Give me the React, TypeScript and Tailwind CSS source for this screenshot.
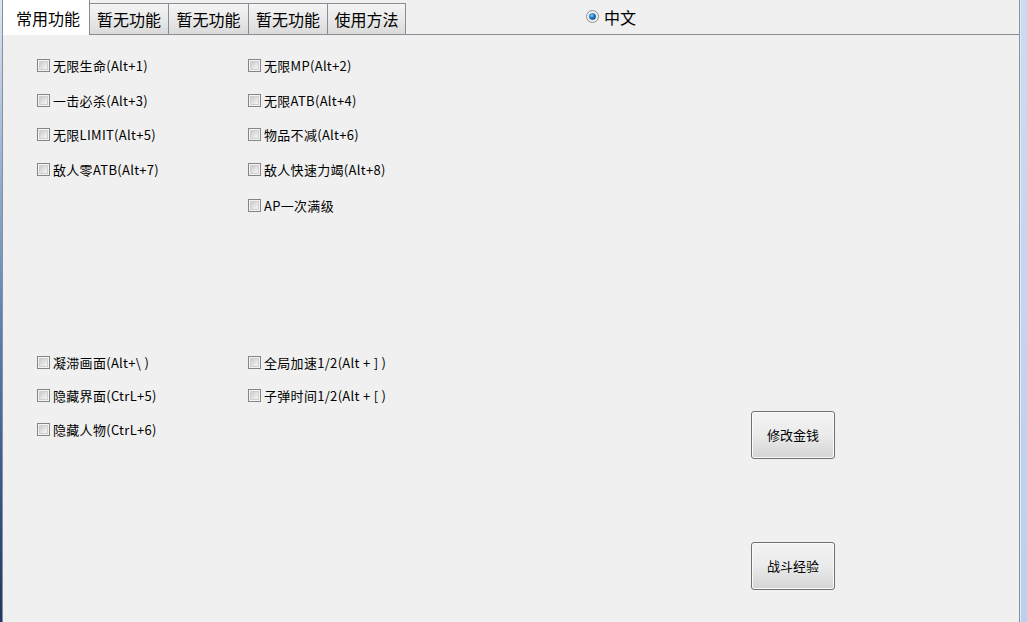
const font = { fontFamily: '"Noto Sans CJK SC", "Microsoft YaHei", sans-serif' };

const tabs = [
  { label: "常用功能", w: "w-[87px]" },
  { label: "暂无功能", w: "w-[79px]" },
  { label: "暂无功能", w: "w-[80px]" },
  { label: "暂无功能", w: "w-[79px]" },
  { label: "使用方法", w: "w-[78px]" },
];

// each row: [left label, right label, margin-top]
const rows: { left?: string; right?: string; mt: string }[] = [
  { left: "无限生命(Alt+1)", right: "无限MP(Alt+2)", mt: "mt-[20px]" },
  { left: "一击必杀(Alt+3)", right: "无限ATB(Alt+4)", mt: "mt-[15px]" },
  { left: "无限LIMIT(Alt+5)", right: "物品不减(Alt+6)", mt: "mt-[14px]" },
  { left: "敌人零ATB(Alt+7)", right: "敌人快速力竭(Alt+8)", mt: "mt-[15px]" },
  { right: "AP一次满级", mt: "mt-[16px]" },
  { left: "凝滞画面(Alt+\\ )", right: "全局加速1/2(Alt + ] )", mt: "mt-[137px]" },
  { left: "隐藏界面(CtrL+5)", right: "子弹时间1/2(Alt + [ )", mt: "mt-[13px]" },
  { left: "隐藏人物(CtrL+6)", mt: "mt-[14px]" },
];

function CheckBox({ label }: { label: string }) {
  return (
    <label className="flex items-center gap-[3px] text-[13px] text-black leading-none tracking-[0.3px] select-none">
      <span className="w-[13px] h-[13px] border border-[#848585] bg-[#f4f4f4] p-px flex">
        <span className="flex-1 border border-[#cfcfcf] bg-gradient-to-br from-[#cbcbcb] to-[#f7f7f7]" />
      </span>
      <span className="whitespace-pre">{label}</span>
    </label>
  );
}

function Radio() {
  return (
    <svg width="13" height="13" viewBox="0 0 13 13">
      <defs>
        <radialGradient id="dot" cx="0.4" cy="0.35" r="0.7">
          <stop offset="0" stopColor="#7fd0ff" />
          <stop offset="0.5" stopColor="#1c7ec4" />
          <stop offset="1" stopColor="#0b3f73" />
        </radialGradient>
      </defs>
      <circle cx="6.5" cy="6.5" r="6" fill="#f4f4f4" stroke="#8f8f8f" />
      <circle cx="6.5" cy="6.5" r="4.6" fill="#e3e3e3" />
      <circle cx="6.5" cy="6.5" r="3.3" fill="url(#dot)" />
    </svg>
  );
}

function PushButton({ label }: { label: string }) {
  return (
    <button
      type="button"
      className="w-[84px] h-[48px] rounded-[3px] border border-[#707070] bg-gradient-to-b from-[#f3f3f3] via-[#ebebeb] to-[#d4d4d4] text-[13px] text-black shadow-[inset_0_0_0_1px_#fbfbfb]"
    >
      {label}
    </button>
  );
}

export default function App() {
  return (
    <div className="w-[1027px] h-[622px] flex bg-[#f0f0f0] overflow-hidden" style={font}>
      <div className="w-[2px] bg-gradient-to-b from-[#dbe7f5] via-[#5d86b8] to-[#1d3766]" />
      <div className="flex-1 flex flex-col border-l border-r border-[#8d8f94]">
        {/* tab strip */}
        <div className="h-[35px] flex items-end border-b border-[#898c95]">
          {tabs.map((t, i) =>
            i === 0 ? (
              <div
                key={i}
                className={`h-[35px] -mb-px ${t.w} pl-[13px] bg-white border-r border-[#898c95] text-[16px] leading-none flex items-center text-black`}
              >
                {t.label}
              </div>
            ) : (
              <div
                key={i}
                className={`h-[31px] ${t.w} border-t border-r border-[#898c95] bg-gradient-to-b from-[#f4f4f4] via-[#e9e9e9] to-[#dadada] text-[16px] leading-none flex items-center justify-center text-black`}
              >
                {t.label}
              </div>
            ),
          )}
          <div className="self-center ml-[180px] flex items-center gap-[5px] text-[16px] text-black leading-none mb-[1px]">
            <Radio />
            <span>中文</span>
          </div>
        </div>

        {/* content */}
        <div className="flex-1 flex">
          <div className="w-[748px] pl-[34px] flex flex-col">
            {rows.map((r, i) => (
              <div key={i} className={`flex h-[20px] items-center ${r.mt}`}>
                <div className="w-[211px]">{r.left && <CheckBox label={r.left} />}</div>
                <div>{r.right && <CheckBox label={r.right} />}</div>
              </div>
            ))}
          </div>
          <div className="flex flex-col pt-[376px] gap-[83px]">
            <PushButton label="修改金钱" />
            <PushButton label="战斗经验" />
          </div>
        </div>
      </div>
      <div className="w-px bg-[#e3ebf5]" />
      <div className="w-[6px] bg-gradient-to-b from-[#c9dcf2] to-[#b9d1ec]" />
    </div>
  );
}
